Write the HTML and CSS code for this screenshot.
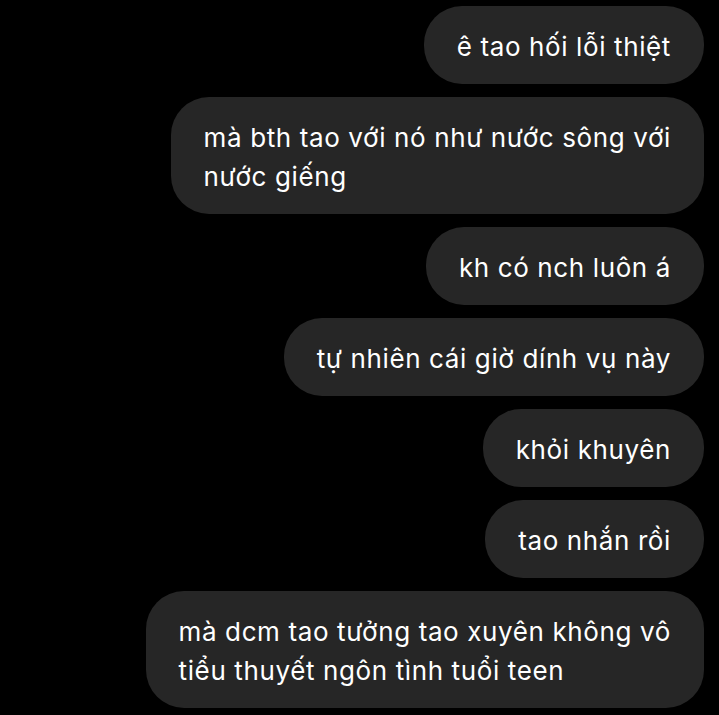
FILE: index.html
```html
<!DOCTYPE html>
<html lang="vi">
<head>
<meta charset="utf-8">
<link rel="stylesheet" href="styles.css">
</head>
<body>
<main class="chat">
  <div class="bubble">ê tao hối lỗi thiệt</div>
  <div class="bubble">mà bth tao với nó như nước sông với<br>nước giếng</div>
  <div class="bubble">kh có nch luôn á</div>
  <div class="bubble">tự nhiên cái giờ dính vụ này</div>
  <div class="bubble">khỏi khuyên</div>
  <div class="bubble">tao nhắn rồi</div>
  <div class="bubble">mà dcm tao tưởng tao xuyên không vô<br>tiểu thuyết ngôn tình tuổi teen</div>
</main>
</body>
</html>
```
FILE: styles.css
```css
html, body {
  margin: 0;
  background: #000;
}
.chat {
  display: flex;
  flex-direction: column;
  align-items: flex-end;
  gap: 13px;
  padding: 6px 15px 0 0;
  font-family: Inter, "Noto Sans", sans-serif;
}
.bubble {
  background: #262626;
  color: #fff;
  font-size: 26px;
  letter-spacing: 0.62px;
  line-height: 39px;
  padding: 21px 33px 18px;
  border-radius: 38px;
  white-space: nowrap;
}
```
